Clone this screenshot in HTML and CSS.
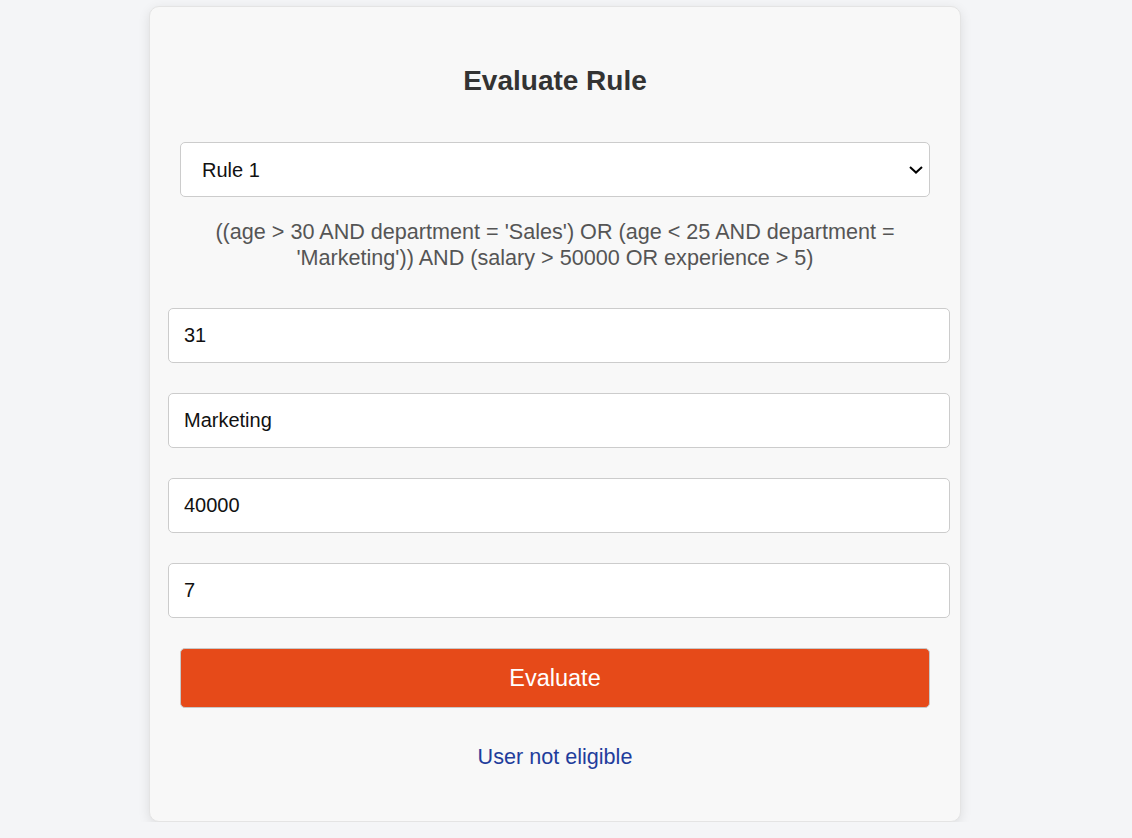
FILE: index.html
```html
<!DOCTYPE html>
<html lang="en">
<head>
<meta charset="utf-8">
<title>Evaluate Rule</title>
<link rel="stylesheet" href="styles.css">
</head>
<body>
<div class="page">
  <div class="card">
    <h2 class="title">Evaluate Rule</h2>
    <select class="rule-select">
      <option>Rule 1</option>
      <option>Rule 2</option>
    </select>
    <p class="rule-text">((age &gt; 30 AND department = 'Sales') OR (age &lt; 25 AND department = 'Marketing')) AND (salary &gt; 50000 OR experience &gt; 5)</p>
    <div class="fields">
      <input class="field" type="text" value="31">
      <input class="field" type="text" value="Marketing">
      <input class="field" type="text" value="40000">
      <input class="field" type="text" value="7">
    </div>
    <button class="evaluate-btn" type="button">Evaluate</button>
    <p class="result">User not eligible</p>
  </div>
</div>
</body>
</html>
```

FILE: styles.css
```css
html, body {
  margin: 0;
  padding: 0;
}
body {
  background: #f4f5f7;
  font-family: "Liberation Sans", Arial, sans-serif;
}
.page {
  display: flex;
  justify-content: center;
  padding: 6px 22px 0 0;
}
.card {
  width: 750px;
  padding: 0 30px 0;
  background: #f8f8f8;
  border: 1px solid #e4e4e4;
  border-radius: 10px;
  box-shadow: 0 3px 12px rgba(0, 0, 0, 0.1);
  display: flex;
  flex-direction: column;
  height: 814px;
  box-sizing: content-box;
}
.title {
  margin: 58px 0 45px;
  font-size: 28px;
  line-height: 32px;
  font-weight: bold;
  color: #333;
  text-align: center;
}
.rule-select {
  -webkit-appearance: none;
  appearance: none;
  width: 100%;
  height: 55px;
  box-sizing: border-box;
  padding: 0 40px 0 21px;
  font-family: "Liberation Sans", Arial, sans-serif;
  font-size: 20px;
  color: #111;
  background-color: #fff;
  background-image: url("data:image/svg+xml,%3Csvg xmlns='http://www.w3.org/2000/svg' width='14' height='8' viewBox='0 0 14 8'%3E%3Cpath d='M1 1 L7 6.6 L13 1' fill='none' stroke='%23000' stroke-width='2'/%3E%3C/svg%3E");
  background-repeat: no-repeat;
  background-position: right 6px center;
  background-size: 14px 8px;
  border: 1px solid #cccccc;
  border-radius: 5px;
}
.rule-text {
  margin: 22px 0 37px;
  font-size: 21.6px;
  line-height: 26px;
  color: #555;
  text-align: center;
}
.fields {
  display: flex;
  flex-direction: column;
  gap: 30px;
  margin-left: -12px;
  width: 782px;
}
.field {
  width: 100%;
  height: 55px;
  box-sizing: border-box;
  padding: 0 15px;
  font-family: "Liberation Sans", Arial, sans-serif;
  font-size: 20px;
  color: #111;
  background: #fff;
  border: 1px solid #cccccc;
  border-radius: 5px;
}
.evaluate-btn {
  margin-top: 30px;
  width: 100%;
  height: 60px;
  font-family: "Liberation Sans", Arial, sans-serif;
  font-size: 23.5px;
  color: #fff;
  background: #e64a19;
  border: 1px solid #c8c8c8;
  border-radius: 5px;
}
.result {
  margin: 37px 0 0;
  font-size: 21.6px;
  line-height: 24px;
  color: #1f3d9c;
  text-align: center;
}
```
